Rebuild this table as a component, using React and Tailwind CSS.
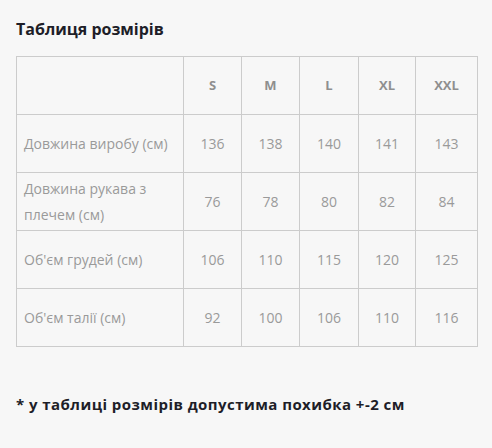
import React from 'react';

const sizes = ['S', 'M', 'L', 'XL', 'XXL'];

const rows = [
  { label: 'Довжина виробу (см)', values: [136, 138, 140, 141, 143] },
  { label: 'Довжина рукава з плечем (см)', values: [76, 78, 80, 82, 84] },
  { label: "Об'єм грудей (см)", values: [106, 110, 115, 120, 125] },
  { label: "Об'єм талії (см)", values: [92, 100, 106, 110, 116] },
];

const colWidths = ['w-[58px]', 'w-[58px]', 'w-[59px]', 'w-[57px]', 'w-[62px]'];

export default function App() {
  return (
    <div className="min-h-[448px] w-[492px] bg-[#f7f7f7] px-4 pt-[19px] font-['Open_Sans',sans-serif]">
      <h2 className="text-[16px] font-bold leading-5 text-[#1e1e28]">Таблиця розмірів</h2>

      <table className="mt-[17px] w-[462px] table-fixed border-collapse text-[14px] text-[#9a9a9a]">
        <thead>
          <tr className="h-[58px]">
            <th className="w-[167px] border border-[#cccccc]"></th>
            {sizes.map((s, i) => (
              <th key={s} className={`${colWidths[i]} border border-[#cccccc] text-center text-[13px] font-bold text-[#8f8f8f]`}>
                {s}
              </th>
            ))}
          </tr>
        </thead>
        <tbody>
          {rows.map((row) => (
            <tr key={row.label} className="h-[58px]">
              <td className="border border-[#cccccc] pl-[7px] pr-1 leading-[26px]">{row.label}</td>
              {row.values.map((v, i) => (
                <td key={i} className="border border-[#cccccc] text-center">
                  {v}
                </td>
              ))}
            </tr>
          ))}
        </tbody>
      </table>

      <p className="mt-[46px] text-[15px] font-bold tracking-[0.45px] text-[#1e1e28]">
        * у таблиці розмірів допустима похибка +-2 см
      </p>
    </div>
  );
}
